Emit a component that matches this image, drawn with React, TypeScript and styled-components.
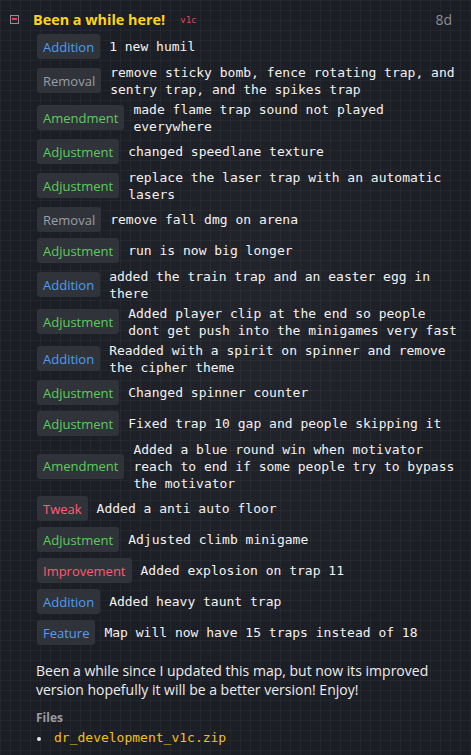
import styled, { createGlobalStyle } from "styled-components";

type Kind =
  | "Addition"
  | "Removal"
  | "Amendment"
  | "Adjustment"
  | "Tweak"
  | "Improvement"
  | "Feature";

const kindColor: Record<Kind, string> = {
  Addition: "#4f9cf0",
  Removal: "#9a9ea6",
  Amendment: "#5ccc5c",
  Adjustment: "#5ccc5c",
  Tweak: "#ff6078",
  Improvement: "#ff5a6e",
  Feature: "#5a9cf0",
};

const changes: { kind: Kind; text: string }[] = [
  { kind: "Addition", text: "1 new humil" },
  { kind: "Removal", text: "remove sticky bomb, fence rotating trap, and sentry trap, and the spikes trap" },
  { kind: "Amendment", text: "made flame trap sound not played everywhere" },
  { kind: "Adjustment", text: "changed speedlane texture" },
  { kind: "Adjustment", text: "replace the laser trap with an automatic lasers" },
  { kind: "Removal", text: "remove fall dmg on arena" },
  { kind: "Adjustment", text: "run is now big longer" },
  { kind: "Addition", text: "added the train trap and an easter egg in there" },
  { kind: "Adjustment", text: "Added player clip at the end so people dont get push into the minigames very fast" },
  { kind: "Addition", text: "Readded with a spirit on spinner and remove the cipher theme" },
  { kind: "Adjustment", text: "Changed spinner counter" },
  { kind: "Adjustment", text: "Fixed trap 10 gap and people skipping it" },
  { kind: "Amendment", text: "Added a blue round win when motivator reach to end if some people try to bypass the motivator" },
  { kind: "Tweak", text: "Added a anti auto floor" },
  { kind: "Adjustment", text: "Adjusted climb minigame" },
  { kind: "Improvement", text: "Added explosion on trap 11" },
  { kind: "Addition", text: "Added heavy taunt trap" },
  { kind: "Feature", text: "Map will now have 15 traps instead of 18" },
];

export default function App() {
  return (
    <>
      <GlobalStyle />
      <Page>
        <Header>
          <Toggle>
            <ToggleBar />
          </Toggle>
          <Title>Been a while here!</Title>
          <Version>v1c</Version>
          <Age>8d</Age>
        </Header>

        <ChangeList>
          {changes.map((c, i) => (
            <ChangeRow key={i}>
              <Badge $color={kindColor[c.kind]}>{c.kind}</Badge>
              <ChangeText>{c.text}</ChangeText>
            </ChangeRow>
          ))}
        </ChangeList>

        <Notes>
          Been a while since I updated this map, but now its improved version
          hopefully it will be a better version! Enjoy!
        </Notes>

        <FilesLabel>Files</FilesLabel>
        <FileList>
          <FileItem>
            <FileLink href="#">dr_development_v1c.zip</FileLink>
          </FileItem>
        </FileList>
      </Page>
    </>
  );
}

const GlobalStyle = createGlobalStyle`
  html, body {
    margin: 0;
    padding: 0;
  }
  body {
    background-color: #1c1e25;
    background-image:
      radial-gradient(ellipse at 55% 45%, rgba(255, 255, 255, 0.03), transparent 60%),
      linear-gradient(rgba(255, 255, 255, 0.035) 1px, transparent 1px),
      linear-gradient(90deg, rgba(255, 255, 255, 0.035) 1px, transparent 1px);
    background-size: 100% 100%, 10px 10px, 10px 10px;
    min-height: 100vh;
    font-family: "Open Sans", "Noto Sans", sans-serif;
  }
`;

const Page = styled.div`
  padding: 8px 10px 0 10px;
`;

const Header = styled.div`
  display: flex;
  align-items: center;
  height: 22px;
`;

const Toggle = styled.div`
  width: 7px;
  height: 7px;
  border: 1px solid #8e9098;
  background: #24262d;
  display: flex;
  align-items: center;
  justify-content: center;
  margin-right: 14px;
`;

const ToggleBar = styled.div`
  width: 5px;
  height: 2px;
  background: #e8404e;
`;

const Title = styled.span`
  color: #ffd21c;
  font-weight: 700;
  font-size: 14.4px;
`;

const Version = styled.span`
  color: #e24450;
  font-family: "DejaVu Sans Mono", monospace;
  font-size: 9px;
  margin-left: 15px;
  margin-top: 2px;
`;

const Age = styled.span`
  margin-left: auto;
  margin-right: 9px;
  color: #8c8e94;
  font-size: 14px;
`;

const ChangeList = styled.div`
  display: flex;
  flex-direction: column;
  margin: 1px 0 0 27px;
`;

const ChangeRow = styled.div`
  display: flex;
  align-items: center;
  gap: 9px;
`;

const Badge = styled.span<{ $color: string }>`
  flex: none;
  margin: 3px 0;
  height: 25px;
  box-sizing: border-box;
  padding: 0 6px;
  display: flex;
  align-items: center;
  background: #30333a;
  border-radius: 3px;
  color: ${(p) => p.$color};
  font-size: 13px;
`;

const ChangeText = styled.span`
  color: #f2f2f2;
  font-family: "DejaVu Sans Mono", "Liberation Mono", monospace;
  font-size: 13px;
  line-height: 17px;
  padding: 1.5px 0;
`;

const Notes = styled.p`
  margin: 13px 0 0 26px;
  color: #ececec;
  font-size: 14px;
  line-height: 19px;
`;

const FilesLabel = styled.div`
  margin: 11px 0 0 26px;
  color: #9a9ca2;
  font-size: 12px;
  font-weight: 700;
  line-height: 16px;
`;

const FileList = styled.ul`
  list-style: none;
  margin: 2px 0 0 26px;
  padding: 0;
`;

const FileItem = styled.li`
  display: flex;
  align-items: center;
  line-height: 20px;

  &::before {
    content: "";
    width: 4px;
    height: 4px;
    border-radius: 50%;
    background: #e8e8e8;
    margin: 1px 13px 0 1px;
  }
`;

const FileLink = styled.a`
  color: #f2c20c;
  font-family: "DejaVu Sans Mono", "Liberation Mono", monospace;
  font-size: 13px;
  text-decoration: none;
`;
